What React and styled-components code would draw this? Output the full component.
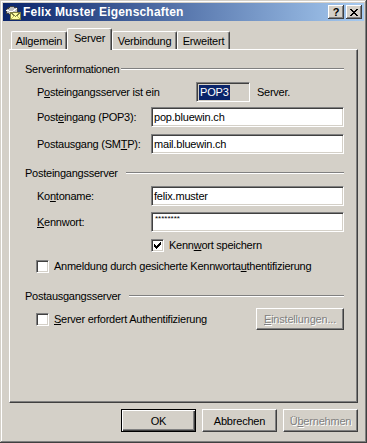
import React from "react";
import styled, { createGlobalStyle } from "styled-components";

const GlobalStyle = createGlobalStyle`
  html, body {
    margin: 0;
    padding: 0;
    background: #d4d0c8;
  }
  body {
    font-family: "Liberation Sans", Arial, sans-serif;
    font-size: 11px;
    color: #000;
  }
`;

const Window = styled.div`
  width: 367px;
  height: 443px;
  box-sizing: border-box;
  padding: 3px;
  background: #d4d0c8;
  display: flex;
  flex-direction: column;
  box-shadow: inset -1px -1px #404040, inset 1px 1px #d4d0c8,
    inset -2px -2px #808080, inset 2px 2px #fff;
`;

const TitleBar = styled.div`
  height: 18px;
  display: flex;
  align-items: center;
  padding: 0 2px;
  background: linear-gradient(to right, #0a246a, #a6caf0);
`;

const TitleText = styled.div`
  flex: 1;
  margin-left: 2px;
  color: #fff;
  font-weight: bold;
  font-size: 12px;
  letter-spacing: 0.2px;
  white-space: nowrap;
`;

const TitleButton = styled.div`
  width: 16px;
  height: 14px;
  box-sizing: border-box;
  margin-left: ${(p) => p.$ml || 0}px;
  display: flex;
  align-items: center;
  justify-content: center;
  background: #d4d0c8;
  font-weight: bold;
  font-size: 11px;
  line-height: 12px;
  box-shadow: inset -1px -1px #404040, inset 1px 1px #fff,
    inset -2px -2px #808080;
`;

const Body = styled.div`
  flex: 1;
  display: flex;
  flex-direction: column;
  padding: 7px 6px 0 6px;
`;

const TabStrip = styled.div`
  height: 21px;
  display: flex;
  align-items: flex-end;
  padding-left: 2px;
`;

const Tab = styled.div`
  position: relative;
  z-index: ${(p) => (p.$active ? 1 : 0)};
  width: ${(p) => p.$w}px;
  height: ${(p) => (p.$active ? 22 : 18)}px;
  margin-bottom: ${(p) => (p.$active ? -1 : 0)}px;
  box-sizing: border-box;
  display: flex;
  align-items: center;
  justify-content: center;
  padding-bottom: ${(p) => (p.$active ? 3 : 0)}px;
  background: #d4d0c8;
  border-top: 1px solid #fff;
  border-left: 1px solid #fff;
  border-right: 1px solid #404040;
  border-radius: 2px 2px 0 0;
  box-shadow: inset -1px 0 #808080;
  white-space: nowrap;
  letter-spacing: -0.2px;
`;

const Panel = styled.div`
  height: 354px;
  box-sizing: border-box;
  padding: 12px 13px 0 15px;
  border: 1px solid;
  border-color: #fff #404040 #404040 #fff;
  box-shadow: inset -1px -1px #808080;
  display: flex;
  flex-direction: column;
`;

const Block = styled.div`
  margin-top: ${(p) => p.$mt || 0}px;
`;

const GroupHead = styled.div`
  height: 14px;
  display: flex;
  align-items: center;
  white-space: nowrap;
  letter-spacing: -0.25px;
`;

const GroupLine = styled.div`
  flex: 1;
  margin-left: ${(p) => p.$gap}px;
  border-top: 1px solid #808080;
  border-bottom: 1px solid #fff;
`;

const FieldRow = styled.div`
  display: grid;
  grid-template-columns: 114px 193px;
  align-items: center;
  padding-left: 12px;
  height: 20px;
`;

const InlineRow = styled.div`
  display: flex;
  align-items: center;
  height: 20px;
  padding-left: 12px;
`;

const Label = styled.span`
  white-space: nowrap;
  letter-spacing: -0.25px;
  width: ${(p) => (p.$w ? `${p.$w}px` : "auto")};
  margin-left: ${(p) => p.$ml || 0}px;
`;

const Key = styled.u`
  text-decoration: underline;
  text-underline-offset: 1px;
`;

const Edit = styled.div`
  height: 20px;
  box-sizing: border-box;
  display: flex;
  align-items: ${(p) => (p.$top ? "flex-start" : "center")};
  padding: ${(p) => (p.$top ? "1px 2px 0 3px" : "0 2px")};
  width: ${(p) => (p.$w ? `${p.$w}px` : "auto")};
  background: ${(p) => (p.$readonly ? "#d4d0c8" : "#fff")};
  border: 1px solid;
  border-color: #808080 #fff #fff #808080;
  box-shadow: inset 1px 1px #404040, inset -1px -1px #d4d0c8;
  white-space: nowrap;
  letter-spacing: ${(p) => (p.$top ? "0" : "-0.2px")};
  font-size: ${(p) => (p.$top ? 8 : 11)}px;
  line-height: ${(p) => (p.$top ? 10 : 14)}px;
`;

const Selected = styled.span`
  background: #0a246a;
  color: #fff;
  padding: 0 1px;
  line-height: 15px;
`;

const CheckRow = styled.div`
  display: flex;
  align-items: center;
  height: ${(p) => p.$h || 14}px;
  padding-left: ${(p) => p.$indent}px;
  justify-content: ${(p) => (p.$spread ? "space-between" : "flex-start")};
`;

const CheckLabel = styled.label`
  display: flex;
  align-items: center;
  gap: 5px;
  white-space: nowrap;
  letter-spacing: -0.25px;
`;

const Box = styled.span`
  width: 13px;
  height: 13px;
  box-sizing: border-box;
  display: flex;
  align-items: center;
  justify-content: center;
  background: #fff;
  border: 1px solid;
  border-color: #808080 #fff #fff #808080;
  box-shadow: inset 1px 1px #404040, inset -1px -1px #d4d0c8;
`;

const Button = styled.div`
  width: ${(p) => p.$w || 75}px;
  height: ${(p) => p.$h || 23}px;
  box-sizing: border-box;
  display: flex;
  align-items: center;
  justify-content: center;
  background: #d4d0c8;
  border: 1px solid;
  border-color: ${(p) => (p.$default ? "#000" : "#fff #404040 #404040 #fff")};
  box-shadow: ${(p) =>
    p.$default
      ? "inset 1px 1px #fff, inset -1px -1px #404040, inset -2px -2px #808080"
      : "inset -1px -1px #808080"};
  color: ${(p) => (p.$disabled ? "#808080" : "#000")};
  text-shadow: ${(p) => (p.$disabled ? "1px 1px #fff" : "none")};
  white-space: nowrap;
  letter-spacing: -0.2px;
`;

const ButtonRow = styled.div`
  display: flex;
  justify-content: flex-end;
  gap: 6px;
  margin-top: 6px;
`;

const AccountIcon = () => (
  <svg width="16" height="16" viewBox="0 0 16 16" shapeRendering="crispEdges">
    <path d="M1 6 L6 2 L12 4 L12 8 L7 11 L1 9 Z" fill="#c0c0c0" stroke="#404040" strokeWidth="1" />
    <path d="M1 6 L7 8 L12 4" fill="none" stroke="#fff" strokeWidth="1" />
    <path d="M7 8 L7 11" stroke="#808080" strokeWidth="1" />
    <rect x="5.5" y="8.5" width="10" height="7" fill="#ffffa0" stroke="#808040" />
    <path d="M5.5 8.5 L10.5 12.5 L15.5 8.5" fill="none" stroke="#808040" />
    <path d="M5.5 15.5 L9 12 M15.5 15.5 L12 12" fill="none" stroke="#c0c060" />
  </svg>
);

const CloseGlyph = () => (
  <svg width="8" height="7" viewBox="0 0 8 7" shapeRendering="crispEdges">
    <path d="M0 0h2v1h1v1h2V1h1V0h2v1H7v1H6v1H5v1h1v1h1v1h1v1H6V6H5V5H3v1H2v1H0V6h1V5h1V4h1V3H2V2H1V1H0z" fill="#000" />
  </svg>
);

const CheckMark = () => (
  <svg width="7" height="7" viewBox="0 0 7 7" shapeRendering="crispEdges">
    <path d="M6 0h1v3H6v1H5v1H4v1H3v1H2V6H1V5H0V2h1v1h1v1h1V3h1V2h1V1h1z" fill="#000" />
  </svg>
);

const Checkbox = ({ checked }) => <Box>{checked && <CheckMark />}</Box>;

export default function App() {
  return (
    <>
      <GlobalStyle />
      <Window>
        <TitleBar>
          <AccountIcon />
          <TitleText>Felix Muster Eigenschaften</TitleText>
          <TitleButton>?</TitleButton>
          <TitleButton $ml={2}>
            <CloseGlyph />
          </TitleButton>
        </TitleBar>
        <Body>
          <TabStrip>
            <Tab $w={56}>Allgemein</Tab>
            <Tab $w={45} $active>
              Server
            </Tab>
            <Tab $w={65}>Verbindung</Tab>
            <Tab $w={53}>Erweitert</Tab>
          </TabStrip>
          <Panel>
            <GroupHead>
              Serverinformationen
              <GroupLine $gap={2} />
            </GroupHead>
            <Block $mt={6}>
              <InlineRow>
                <Label $w={159}>
                  P<Key>o</Key>steingangsserver ist ein
                </Label>
                <Edit $w={54} $readonly>
                  <Selected>POP3</Selected>
                </Edit>
                <Label $ml={7}>Server.</Label>
              </InlineRow>
            </Block>
            <Block $mt={5}>
              <FieldRow>
                <Label>
                  Post<Key>e</Key>ingang (POP3):
                </Label>
                <Edit>pop.bluewin.ch</Edit>
              </FieldRow>
            </Block>
            <Block $mt={7}>
              <FieldRow>
                <Label>
                  Postausgang (SM<Key>T</Key>P):
                </Label>
                <Edit>mail.bluewin.ch</Edit>
              </FieldRow>
            </Block>
            <Block $mt={12}>
              <GroupHead>
                Posteingangsserver
                <GroupLine $gap={8} />
              </GroupHead>
            </Block>
            <Block $mt={6}>
              <FieldRow>
                <Label>
                  Ko<Key>n</Key>toname:
                </Label>
                <Edit>felix.muster</Edit>
              </FieldRow>
            </Block>
            <Block $mt={6}>
              <FieldRow>
                <Label>
                  <Key>K</Key>ennwort:
                </Label>
                <Edit $top>********</Edit>
              </FieldRow>
            </Block>
            <Block $mt={6}>
              <CheckRow $indent={126}>
                <CheckLabel>
                  <Checkbox checked />
                  <span>
                    Kenn<Key>w</Key>ort speichern
                  </span>
                </CheckLabel>
              </CheckRow>
            </Block>
            <Block $mt={7}>
              <CheckRow $indent={11}>
                <CheckLabel>
                  <Checkbox />
                  <span>
                    Anmeldung durch gesicherte Kennworta<Key>u</Key>thentifizierung
                  </span>
                </CheckLabel>
              </CheckRow>
            </Block>
            <Block $mt={16}>
              <GroupHead>
                Postausgangsserver
                <GroupLine $gap={8} />
              </GroupHead>
            </Block>
            <Block $mt={5}>
              <CheckRow $indent={11} $h={22} $spread>
                <CheckLabel>
                  <Checkbox />
                  <span>
                    <Key>S</Key>erver erfordert Authentifizierung
                  </span>
                </CheckLabel>
                <Button $w={88} $h={22} $disabled>
                  <span>
                    <Key>E</Key>instellungen...
                  </span>
                </Button>
              </CheckRow>
            </Block>
          </Panel>
          <ButtonRow>
            <Button $default>OK</Button>
            <Button>Abbrechen</Button>
            <Button $disabled>
              <span>
                Ü<Key>b</Key>ernehmen
              </span>
            </Button>
          </ButtonRow>
        </Body>
      </Window>
    </>
  );
}
